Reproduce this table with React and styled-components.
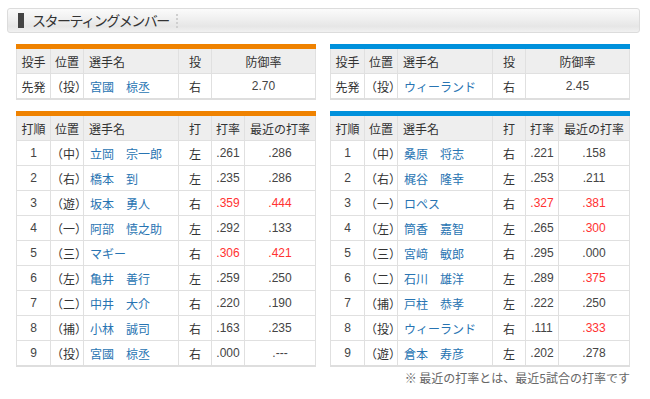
import styled, { createGlobalStyle } from 'styled-components'

const GlobalStyle = createGlobalStyle`
	body {
		margin: 0;
		background: #fff;
		font-family: "Liberation Sans", "Noto Sans CJK JP", sans-serif;
		color: #333;
		text-spacing-trim: space-all;
	}
`

const Page = styled.div`
	width: 650px;
	padding: 8px 10px 0 7px;
	box-sizing: border-box;
`

const TitleBar = styled.div`
	height: 25px;
	box-sizing: border-box;
	border: 1px solid #dcdcdc;
	border-radius: 3px;
	background: linear-gradient(#fbfbfb 0%, #efefef 45%, #e6e6e6 75%, #f1f1f1 100%);
	display: flex;
	align-items: center;
	padding-left: 10px;
	h2 {
		margin: 0;
		font-size: 14px;
		font-weight: normal;
		color: #333;
		letter-spacing: -1.5px;
		padding-left: 8px;
		padding-right: 7px;
		border-left: 6px solid #444;
		line-height: 15px;
		font-family: "Noto Sans CJK JP", sans-serif;
	}
	span {
		width: 0;
		height: 14px;
		border-left: 2px dotted #cfcfcf;
	}
`

const Columns = styled.div`
	display: flex;
	gap: 14px;
	padding: 11px 0 0 9px;
`

const Column = styled.div`
	width: 300px;
	display: flex;
	flex-direction: column;
	gap: 11px;
`

const Table = styled.table`
	width: 300px;
	border-collapse: collapse;
	table-layout: fixed;
	border-top: 5px solid ${(p) => p.$accent};
	border-bottom: 2px solid #dedede;
	font-size: 12px;
	th,
	td {
		height: 24px;
		padding: 0;
		border: 1px solid #e0e0e0;
		text-align: center;
		white-space: nowrap;
		font-weight: normal;
		color: #333;
	}
	th {
		background: #eeeeee;
		font-family: "Noto Sans CJK JP", sans-serif;
	}
	th.name {
		text-align: left;
		padding-left: 5px;
	}
`

const NameCell = styled.td`
	&& {
		text-align: left;
		padding-left: 6px;
		color: #2874b2;
		font-family: "Noto Sans CJK JP", sans-serif;
	}
`

const Num = styled.td`
	&& {
		color: ${(p) => (p.$hot ? '#ff3232' : '#444')};
	}
`

const Jp = styled.td`
	&& {
		font-family: "Noto Sans CJK JP", sans-serif;
	}
`

const Note = styled.p`
	margin: 2px 0 0;
	padding-right: 10px;
	text-align: right;
	font-size: 12px;
	color: #666;
	font-family: "Noto Sans CJK JP", sans-serif;
`

const teams = [
	{
		accent: '#ef8200',
		pitcher: { name: '宮國　椋丞', hand: '右', era: '2.70' },
		lineup: [
			['1', '中', '立岡　宗一郎', '左', '.261', '.286'],
			['2', '右', '橋本　到', '左', '.235', '.286'],
			['3', '遊', '坂本　勇人', '右', '.359', '.444'],
			['4', '一', '阿部　慎之助', '左', '.292', '.133'],
			['5', '三', 'マギー', '右', '.306', '.421'],
			['6', '左', '亀井　善行', '左', '.259', '.250'],
			['7', '二', '中井　大介', '右', '.220', '.190'],
			['8', '捕', '小林　誠司', '右', '.163', '.235'],
			['9', '投', '宮國　椋丞', '右', '.000', '.---']
		]
	},
	{
		accent: '#0091dc',
		pitcher: { name: 'ウィーランド', hand: '右', era: '2.45' },
		lineup: [
			['1', '中', '桑原　将志', '右', '.221', '.158'],
			['2', '右', '梶谷　隆幸', '左', '.253', '.211'],
			['3', '一', 'ロペス', '右', '.327', '.381'],
			['4', '左', '筒香　嘉智', '左', '.265', '.300'],
			['5', '三', '宮﨑　敏郎', '右', '.295', '.000'],
			['6', '二', '石川　雄洋', '左', '.289', '.375'],
			['7', '捕', '戸柱　恭孝', '左', '.222', '.250'],
			['8', '投', 'ウィーランド', '右', '.111', '.333'],
			['9', '遊', '倉本　寿彦', '左', '.202', '.278']
		]
	}
]

const isHot = (v) => parseFloat(v) >= 0.3

const PitcherTable = ({ accent, pitcher }) => (
	<Table $accent={accent}>
		<colgroup>
			<col style={{ width: 34 }} />
			<col style={{ width: 33 }} />
			<col style={{ width: 95 }} />
			<col style={{ width: 33 }} />
			<col />
		</colgroup>
		<thead>
			<tr>
				<th>投手</th>
				<th>位置</th>
				<th className="name">選手名</th>
				<th>投</th>
				<th>防御率</th>
			</tr>
		</thead>
		<tbody>
			<tr>
				<Jp>先発</Jp>
				<Jp>（投）</Jp>
				<NameCell>{pitcher.name}</NameCell>
				<Jp>{pitcher.hand}</Jp>
				<Num>{pitcher.era}</Num>
			</tr>
		</tbody>
	</Table>
)

const LineupTable = ({ accent, lineup }) => (
	<Table $accent={accent}>
		<colgroup>
			<col style={{ width: 34 }} />
			<col style={{ width: 33 }} />
			<col style={{ width: 95 }} />
			<col style={{ width: 33 }} />
			<col style={{ width: 33 }} />
			<col />
		</colgroup>
		<thead>
			<tr>
				<th>打順</th>
				<th>位置</th>
				<th className="name">選手名</th>
				<th>打</th>
				<th>打率</th>
				<th>最近の打率</th>
			</tr>
		</thead>
		<tbody>
			{lineup.map(([order, pos, name, hand, avg, recent]) => (
				<tr key={order}>
					<Num>{order}</Num>
					<Jp>（{pos}）</Jp>
					<NameCell>{name}</NameCell>
					<Jp>{hand}</Jp>
					<Num $hot={isHot(avg)}>{avg}</Num>
					<Num $hot={isHot(recent)}>{recent}</Num>
				</tr>
			))}
		</tbody>
	</Table>
)

const App = () => (
	<Page>
		<GlobalStyle />
		<TitleBar>
			<h2>スターティングメンバー</h2>
			<span />
		</TitleBar>
		<Columns>
			{teams.map((t) => (
				<Column key={t.accent}>
					<PitcherTable accent={t.accent} pitcher={t.pitcher} />
					<LineupTable accent={t.accent} lineup={t.lineup} />
				</Column>
			))}
		</Columns>
		<Note>※ 最近の打率とは、最近5試合の打率です</Note>
	</Page>
)

export default App
